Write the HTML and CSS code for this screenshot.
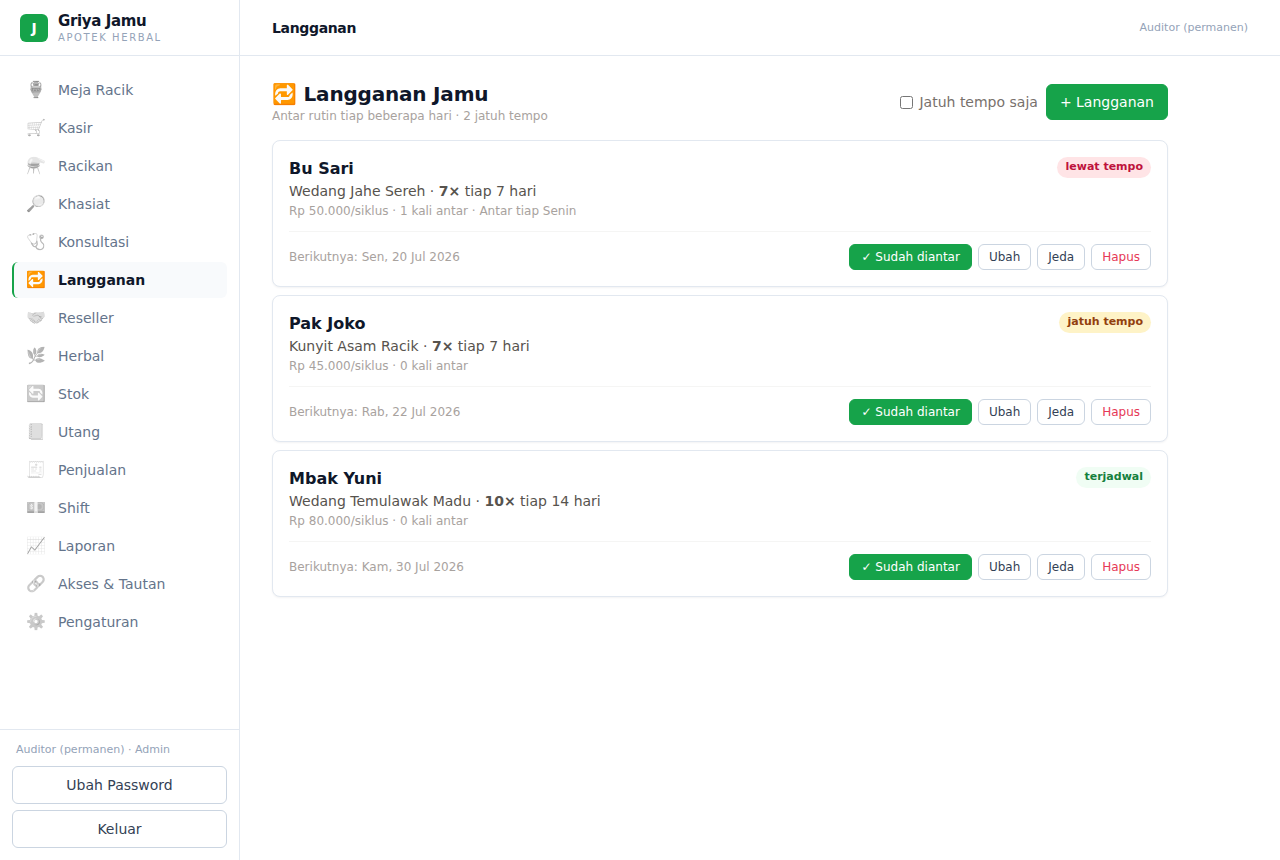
FILE: index.html
```
<!DOCTYPE html>
<html lang="id">
<head>
<meta charset="UTF-8">
<meta name="viewport" content="width=device-width, initial-scale=1.0">
<title>Langganan - Griya Jamu</title>
<link rel="stylesheet" href="styles.css">
</head>
<body>

<aside class="sidebar">
  <div class="brand">
    <div class="brand-logo">J</div>
    <div>
      <div class="brand-name">Griya Jamu</div>
      <div class="brand-sub">APOTEK HERBAL</div>
    </div>
  </div>

  <nav class="nav">
    <a class="nav-item" href="#"><span class="nav-icon">🏺</span>Meja Racik</a>
    <a class="nav-item" href="#"><span class="nav-icon">🛒</span>Kasir</a>
    <a class="nav-item" href="#"><span class="nav-icon">⚗️</span>Racikan</a>
    <a class="nav-item" href="#"><span class="nav-icon">🔎</span>Khasiat</a>
    <a class="nav-item" href="#"><span class="nav-icon">🩺</span>Konsultasi</a>
    <a class="nav-item active" href="#"><span class="nav-icon">🔁</span>Langganan</a>
    <a class="nav-item" href="#"><span class="nav-icon">🤝</span>Reseller</a>
    <a class="nav-item" href="#"><span class="nav-icon">🌿</span>Herbal</a>
    <a class="nav-item" href="#"><span class="nav-icon">🔄</span>Stok</a>
    <a class="nav-item" href="#"><span class="nav-icon">📒</span>Utang</a>
    <a class="nav-item" href="#"><span class="nav-icon">🧾</span>Penjualan</a>
    <a class="nav-item" href="#"><span class="nav-icon">💵</span>Shift</a>
    <a class="nav-item" href="#"><span class="nav-icon">📈</span>Laporan</a>
    <a class="nav-item" href="#"><span class="nav-icon">🔗</span>Akses &amp; Tautan</a>
    <a class="nav-item" href="#"><span class="nav-icon">⚙️</span>Pengaturan</a>
  </nav>

  <div class="account">
    <p class="account-name">Auditor (permanen) · Admin</p>
    <button type="button" class="btn btn-block">Ubah Password</button>
    <button type="button" class="btn btn-block">Keluar</button>
  </div>
</aside>

<div class="page">
  <header class="topbar">
    <span class="topbar-title">Langganan</span>
    <span class="topbar-user">Auditor (permanen)</span>
  </header>

  <main class="content">
    <div class="content-head">
      <div>
        <h1>🔁 Langganan Jamu</h1>
        <p class="muted">Antar rutin tiap beberapa hari · 2 jatuh tempo</p>
      </div>
      <div class="head-actions">
        <label class="filter"><input type="checkbox">Jatuh tempo saja</label>
        <button type="button" class="btn btn-primary">+ Langganan</button>
      </div>
    </div>

    <div class="cards">
      <!-- Bu Sari -->
      <article class="card">
        <div class="card-top">
          <div>
            <h2>Bu Sari</h2>
            <p class="product">Wedang Jahe Sereh · <b>7×</b> tiap 7 hari</p>
            <p class="muted detail">Rp 50.000/siklus · 1 kali antar · Antar tiap Senin</p>
          </div>
          <span class="badge badge-late">lewat tempo</span>
        </div>
        <div class="card-bottom">
          <span class="muted">Berikutnya: Sen, 20 Jul 2026</span>
          <div class="card-actions">
            <button type="button" class="btn btn-small btn-primary">✓ Sudah diantar</button>
            <button type="button" class="btn btn-small">Ubah</button>
            <button type="button" class="btn btn-small">Jeda</button>
            <button type="button" class="btn btn-small btn-danger">Hapus</button>
          </div>
        </div>
      </article>

      <!-- Pak Joko -->
      <article class="card">
        <div class="card-top">
          <div>
            <h2>Pak Joko</h2>
            <p class="product">Kunyit Asam Racik · <b>7×</b> tiap 7 hari</p>
            <p class="muted detail">Rp 45.000/siklus · 0 kali antar</p>
          </div>
          <span class="badge badge-due">jatuh tempo</span>
        </div>
        <div class="card-bottom">
          <span class="muted">Berikutnya: Rab, 22 Jul 2026</span>
          <div class="card-actions">
            <button type="button" class="btn btn-small btn-primary">✓ Sudah diantar</button>
            <button type="button" class="btn btn-small">Ubah</button>
            <button type="button" class="btn btn-small">Jeda</button>
            <button type="button" class="btn btn-small btn-danger">Hapus</button>
          </div>
        </div>
      </article>

      <!-- Mbak Yuni -->
      <article class="card">
        <div class="card-top">
          <div>
            <h2>Mbak Yuni</h2>
            <p class="product">Wedang Temulawak Madu · <b>10×</b> tiap 14 hari</p>
            <p class="muted detail">Rp 80.000/siklus · 0 kali antar</p>
          </div>
          <span class="badge badge-ok">terjadwal</span>
        </div>
        <div class="card-bottom">
          <span class="muted">Berikutnya: Kam, 30 Jul 2026</span>
          <div class="card-actions">
            <button type="button" class="btn btn-small btn-primary">✓ Sudah diantar</button>
            <button type="button" class="btn btn-small">Ubah</button>
            <button type="button" class="btn btn-small">Jeda</button>
            <button type="button" class="btn btn-small btn-danger">Hapus</button>
          </div>
        </div>
      </article>
    </div>
  </main>
</div>

</body>
</html>
```
FILE: styles.css
```
* {
  box-sizing: border-box;
}
body {
  margin: 0;
  min-height: 100vh;
  display: flex;
  font-family: 'DejaVu Sans', sans-serif;
  font-size: 14px;
  line-height: 20px;
  color: #0f172a;
  background-color: #fff;
}
h1, h2, p {
  margin: 0;
}

/* Sidebar */
.sidebar {
  width: 240px;
  flex-shrink: 0;
  display: flex;
  flex-direction: column;
  border-right: 1px solid #e2e8f0;
}
.brand {
  height: 56px;
  display: flex;
  align-items: center;
  gap: 10px;
  padding: 0 20px;
  border-bottom: 1px solid #e2e8f0;
}
.brand-logo {
  width: 28px;
  height: 28px;
  border-radius: 6px;
  background-color: #16a34a;
  color: #fff;
  font-weight: bold;
  line-height: 28px;
  text-align: center;
}
.brand-name {
  font-size: 15px;
  font-weight: bold;
  line-height: 20px;
  letter-spacing: -0.025em;
}
.brand-sub {
  font-size: 10px;
  line-height: 14px;
  letter-spacing: 0.16em;
  color: #94a3b8;
}
.nav {
  flex: 1;
  display: flex;
  flex-direction: column;
  gap: 2px;
  padding: 16px 12px;
}
.nav-item {
  display: flex;
  align-items: center;
  gap: 12px;
  padding: 8px 12px;
  border-left: 2px solid transparent;
  border-radius: 6px;
  color: #64748b;
  text-decoration: none;
}
.nav-icon {
  width: 20px;
  font-size: 16px;
  text-align: center;
  filter: grayscale(1);
  opacity: 0.6;
}
.nav-item.active {
  border-left-color: #16a34a;
  background-color: #f8fafc;
  color: #0f172a;
  font-weight: bold;
}
.nav-item.active .nav-icon {
  filter: none;
  opacity: 1;
}
.account {
  display: flex;
  flex-direction: column;
  gap: 6px;
  padding: 12px;
  border-top: 1px solid #e2e8f0;
}
.account-name {
  padding: 0 4px 2px;
  font-size: 11px;
  line-height: 16px;
  color: #94a3b8;
}

/* Buttons */
.btn {
  padding: 7px 13px;
  border: 1px solid #cbd5e1;
  border-radius: 6px;
  background-color: #fff;
  color: #334155;
  font-family: inherit;
  font-size: 14px;
  line-height: 20px;
  cursor: pointer;
}
.btn-block {
  width: 100%;
  padding: 8px 12px;
}
.btn-small {
  padding: 4px 10px;
  font-size: 12px;
  line-height: 16px;
}
.btn-primary {
  border-color: #16a34a;
  background-color: #16a34a;
  color: #fff;
}
.btn-small.btn-primary {
  padding: 4px 11px;
}
.btn-danger {
  color: #e63956;
}

/* Main column */
.page {
  flex: 1;
  min-width: 0;
}
.topbar {
  height: 56px;
  display: flex;
  align-items: center;
  justify-content: space-between;
  padding: 0 32px;
  border-bottom: 1px solid #e2e8f0;
}
.topbar-title {
  font-weight: bold;
  letter-spacing: -0.025em;
}
.topbar-user {
  font-size: 11px;
  line-height: 17px;
  color: #94a3b8;
}
.content {
  max-width: 960px;
  padding: 24px 32px;
}
.content-head {
  display: flex;
  align-items: center;
  justify-content: space-between;
  margin-bottom: 16px;
}
h1 {
  font-size: 20px;
  line-height: 28px;
  letter-spacing: -0.01em;
}
.muted {
  font-size: 12px;
  line-height: 16px;
  color: #a8a29e;
}
.head-actions {
  display: flex;
  align-items: center;
  gap: 8px;
}
.filter {
  display: flex;
  align-items: center;
  gap: 6px;
  color: #78716c;
}
.filter input {
  margin: 0;
}

/* Subscription cards */
.cards {
  display: flex;
  flex-direction: column;
  gap: 8px;
}
.card {
  padding: 16px;
  border: 1px solid #e2e8f0;
  border-radius: 8px;
  background-color: #fff;
  box-shadow: 0 1px 2px rgba(15, 23, 42, 0.05);
}
.card-top {
  display: flex;
  align-items: flex-start;
  justify-content: space-between;
}
.card h2 {
  font-size: 16px;
  line-height: 24px;
}
.product {
  color: #57534e;
}
.detail {
  margin-top: 2px;
}
.badge {
  padding: 2px 8px 3px;
  border-radius: 999px;
  font-size: 11px;
  font-weight: bold;
  line-height: 16px;
}
.badge-late {
  background-color: #ffe4e6;
  color: #be123c;
}
.badge-due {
  background-color: #fef3c7;
  color: #92400e;
}
.badge-ok {
  background-color: #f0fdf4;
  color: #15803d;
}
.card-bottom {
  display: flex;
  align-items: center;
  justify-content: space-between;
  margin-top: 12px;
  padding-top: 12px;
  border-top: 1px solid #f5f5f4;
}
.card-actions {
  display: flex;
  gap: 6px;
}
```
